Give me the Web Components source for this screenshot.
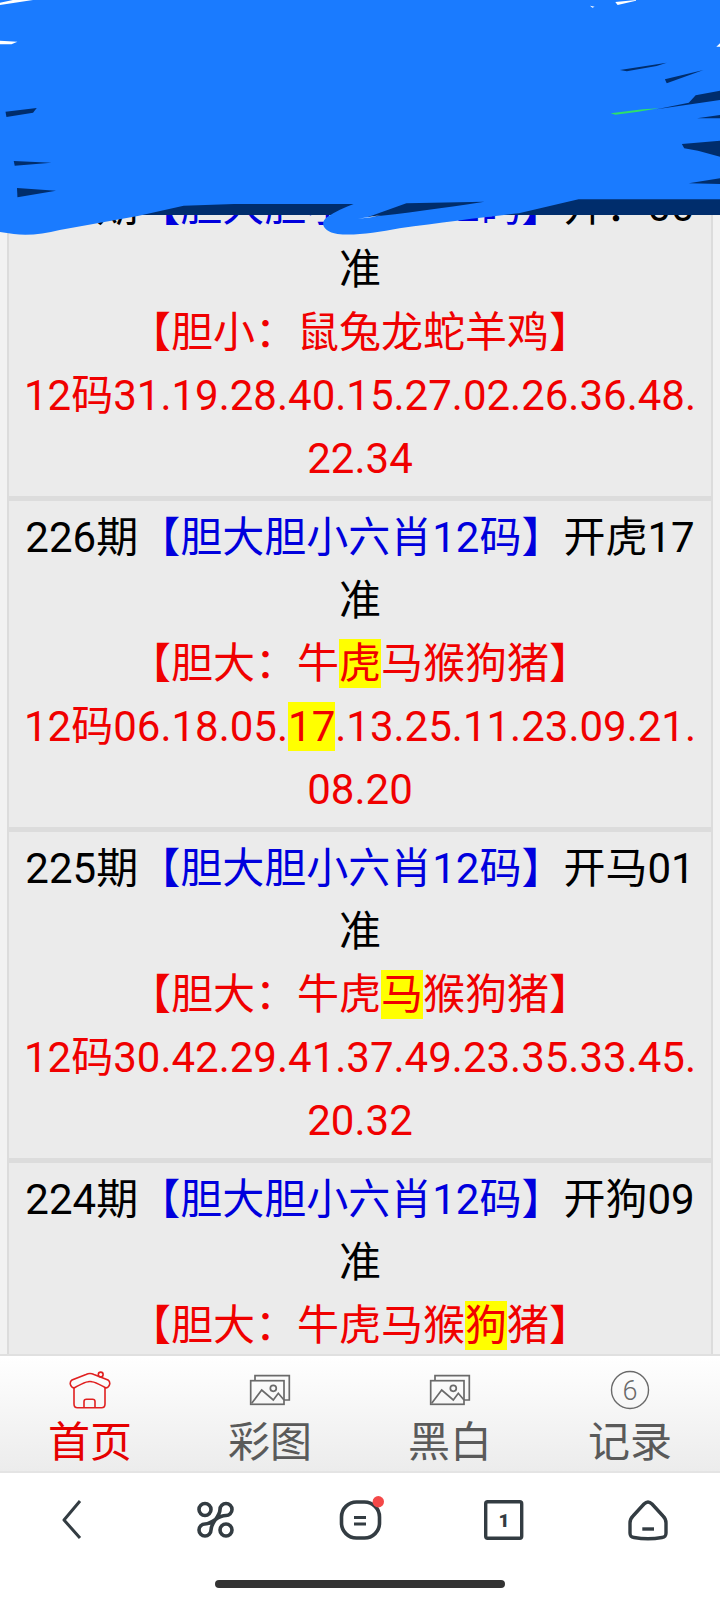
<!DOCTYPE html>
<html lang="zh">
<head>
<meta charset="utf-8">
<title>胆大胆小六肖12码</title>
<style>
  html, body { margin: 0; padding: 0; }
  body {
    width: 720px;
    height: 1600px;
    overflow: hidden;
    position: relative;
    background: #fff;
    display: flex;
    flex-direction: column;
    font-family: Roboto, "Noto Sans CJK SC", sans-serif;
  }
</style>
</head>
<body>
  <result-list>
    <result-row issue="227期" open="开：00" tag="【胆小：鼠兔龙蛇羊鸡】" nums="12码31.19.28.40.15.27.02.26.36.48.22.34"></result-row>
    <result-row issue="226期" open="开虎17" tag="【胆大：牛虎马猴狗猪】" hit="虎" nums="12码06.18.05.17.13.25.11.23.09.21.08.20" hitnum="17"></result-row>
    <result-row issue="225期" open="开马01" tag="【胆大：牛虎马猴狗猪】" hit="马" nums="12码30.42.29.41.37.49.23.35.33.45.20.32"></result-row>
    <result-row issue="224期" open="开狗09" tag="【胆大：牛虎马猴狗猪】" hit="狗"></result-row>
  </result-list>
  <tab-bar></tab-bar>
  <browser-bar></browser-bar>
  <scribble-mask></scribble-mask>

<script>
class ResultList extends HTMLElement {
  constructor () {
    super()
    this.shadow = this.attachShadow({ mode: 'open' })
  }

  connectedCallback () {
    this.shadow.innerHTML =
    /* html */`
    <style>
      :host {
        display: block;
        height: 1354px;
        overflow: hidden;
        flex: none;
        background: #f2f2f2;
        box-sizing: border-box;
        padding: 168px 7px 0;
      }
      .rows {
        display: flex;
        flex-direction: column;
      }
    </style>
    <div class="rows"><slot></slot></div>
    `
  }
}

class ResultRow extends HTMLElement {
  constructor () {
    super()
    this.shadow = this.attachShadow({ mode: 'open' })
  }

  connectedCallback () {
    const issue = this.getAttribute('issue')
    const open = this.getAttribute('open')
    const tag = this.getAttribute('tag')
    const hit = this.getAttribute('hit')
    const nums = this.getAttribute('nums')
    const hitnum = this.getAttribute('hitnum')
    const tagHtml = hit ? tag.replace(hit, `<mark>${hit}</mark>`) : tag
    const numHtml = nums && hitnum ? nums.replace('.' + hitnum + '.', `.<mark>${hitnum}</mark>.`) : nums
    this.shadow.innerHTML =
    /* html */`
    <style>
      :host {
        display: block;
        box-sizing: border-box;
        height: 331px;
        background: #ebebeb;
        border: 2px solid #dcdcdc;
        border-bottom-width: 3px;
        padding: 5px 8px 0;
        text-align: center;
        font-size: 42px;
        line-height: 63px;
        color: #000;
        word-break: break-all;
      }
      .blue { color: #0000dd; }
      .red { color: #f00000; }
      mark { background: #ffff00; color: inherit; }
    </style>
    <div>${issue}<span class="blue">【胆大胆小六肖12码】</span>${open}准</div>
    <div class="red">${tagHtml}</div>
    ${nums ? `<div class="red">${numHtml}</div>` : ''}
    `
  }
}

class TabBar extends HTMLElement {
  constructor () {
    super()
    this.shadow = this.attachShadow({ mode: 'open' })
  }

  connectedCallback () {
    const pic = /* html */`
      <svg width="42" height="32" viewBox="0 0 42 32" fill="none" stroke="#6a6a6a" stroke-width="1.7">
        <path d="M6 6V1.700H40.300V26H35"/>
        <rect x="1.700" y="6.700" width="33.300" height="23.600"/>
        <circle cx="24.300" cy="14.300" r="3"/>
        <path d="M2.700 29.300L12.700 16L24.300 26L29.300 19.300L35 26"/>
      </svg>`
    this.shadow.innerHTML =
    /* html */`
    <style>
      :host {
        display: grid;
        grid-template-columns: repeat(4, 1fr);
        flex: none;
        box-sizing: border-box;
        height: 119px;
        background: linear-gradient(#ffffff, #ececec);
        border-top: 2px solid #e0e0e0;
        border-bottom: 2px solid #e4e4e4;
        font-size: 42px;
        color: #5a5a5a;
      }
      .tab {
        display: flex;
        flex-direction: column;
        align-items: center;
        padding-top: 14px;
      }
      .ico {
        height: 40px;
        display: flex;
        align-items: center;
        justify-content: center;
      }
      .lbl { line-height: 50px; margin-top: 8px; }
      .on { color: #e60000; }
    </style>
    <div class="tab on">
      <div class="ico">
        <svg width="42" height="38" viewBox="0 0 42 38" fill="none" stroke="#e02020" stroke-width="1.6">
          <path d="M5 17C1 16 0 11 3 9L17 3.500C20 2 22 2 25 3.500L39 9C42 11 41 16 37 17C33 15 27 11 23 10.700C22 10.500 20 10.500 19 10.700C15 11 9 15 5 17Z"/>
          <circle cx="31.700" cy="3.500" r="2.400"/>
          <path d="M5 17V33C5 35.500 6 36.700 8.500 36.700H32.500C35 36.700 36 35.500 36 33V17"/>
          <path d="M15 36.700V30.500C15 29 16 28.300 17.500 28.300H23.500C25 28.300 26 29 26 30.500V36.700"/>
        </svg>
      </div>
      <div class="lbl">首页</div>
    </div>
    <div class="tab"><div class="ico">${pic}</div><div class="lbl">彩图</div></div>
    <div class="tab"><div class="ico">${pic}</div><div class="lbl">黑白</div></div>
    <div class="tab">
      <div class="ico">
        <svg width="42" height="40" viewBox="0 0 42 40" fill="none" stroke="#6a6a6a" stroke-width="1.4">
          <circle cx="21" cy="20" r="18.5"/>
          <text x="21" y="29.5" text-anchor="middle" font-family="Roboto, sans-serif" font-weight="300" font-size="27" fill="#6a6a6a" stroke="none">6</text>
        </svg>
      </div>
      <div class="lbl">记录</div>
    </div>
    `
  }
}

class BrowserBar extends HTMLElement {
  constructor () {
    super()
    this.shadow = this.attachShadow({ mode: 'open' })
  }

  connectedCallback () {
    this.shadow.innerHTML =
    /* html */`
    <style>
      :host {
        display: flex;
        flex-direction: column;
        align-items: center;
        flex: 1;
        background: #fff;
        padding-top: 25px;
      }
      .btns {
        display: grid;
        grid-template-columns: repeat(5, 144px);
        justify-items: center;
        height: 44px;
      }
      svg { display: block; overflow: visible; }
      .pill {
        margin-top: 38px;
        width: 290px;
        height: 8px;
        border-radius: 4px;
        background: #333333;
      }
    </style>
    <div class="btns">
      <svg width="44" height="44" viewBox="0 0 44 44" fill="none" stroke="#333c42" stroke-width="3">
        <path d="M30 3L14 22L30 40" stroke-linejoin="round"/>
      </svg>
      <svg width="44" height="44" viewBox="0 0 44 44" fill="none" stroke="#333c42" stroke-width="3.6">
        <circle cx="11" cy="11.500" r="6"/>
        <circle cx="32" cy="32" r="6"/>
        <path d="M21.500 21.500C24 18 26 15 26 11.500A6 6 0 1 1 32 17.500C28 17.500 25 19 21.500 21.500C19 25 17 28 17 32A6 6 0 1 1 11 26C15 26 18 24 21.500 21.500Z"/>
      </svg>
      <svg width="44" height="44" viewBox="0 0 44 44" fill="none" stroke="#333c42" stroke-width="3.6">
        <rect x="3.500" y="4" width="38" height="36" rx="15" ry="15"/>
        <path d="M16 19.500H28M16 26H28" stroke-width="3"/>
        <circle cx="40.300" cy="3.700" r="5.700" fill="#f44848" stroke="none"/>
      </svg>
      <svg width="44" height="44" viewBox="0 0 44 44" fill="none" stroke="#333c42" stroke-width="3.4">
        <rect x="3.700" y="3.700" width="36" height="36.600" rx="2"/>
        <text x="22" y="28.700" text-anchor="middle" font-family="Roboto, sans-serif" font-weight="900" font-size="19" fill="#333c42" stroke="none">1</text>
      </svg>
      <svg width="44" height="44" viewBox="0 0 44 44" fill="none" stroke="#333c42" stroke-width="3.4">
        <path d="M22 4C24 4 25 5 26 6L37 18C39 20 40 22 40 25V35C40 38 39 39 36 39.500C28 41 16 41 8 39.500C5 39 4 38 4 35V25C4 22 5 20 7 18L18 6C19 5 20 4 22 4Z" stroke-linejoin="round"/>
        <path d="M16.300 31H28"/>
      </svg>
    </div>
    <div class="pill"></div>
    `
  }
}

class ScribbleMask extends HTMLElement {
  constructor () {
    super()
    this.shadow = this.attachShadow({ mode: 'open' })
  }

  connectedCallback () {
    this.shadow.innerHTML =
    /* html */`
    <style>
      :host {
        position: absolute;
        left: 0;
        top: 0;
        width: 720px;
        height: 300px;
        pointer-events: none;
      }
      svg { display: block; }
    </style>
    <svg width="720" height="300" viewBox="0 0 1568 900" preserveAspectRatio="none">
      <rect x="0" y="0" width="1568" height="645" fill="#002d6c"/>
      <path fill="#1a7bff" d="M0 0H1568V598H1260L1130 640C1060 650 960 668 870 685C820 698 770 708 735 702C705 695 695 670 712 652C730 635 750 622 770 612L510 612L400 617L300 648L130 690C95 702 60 708 30 702L0 696Z"/>
      <path fill="#002d6c" d="M800 652L885 610L1055 605C960 625 880 640 800 652Z"/>
      <path fill="#ffffff" d="M780 656L830 645L808 652Z"/>
      <path fill="#002d6c" d="M12 335L80 324L72 338L14 351Z"/>
      <path fill="#002d6c" d="M30 483L112 488L32 497Z"/>
      <path fill="#002d6c" d="M37 564L122 572L38 592Z"/>
      <path fill="#002d6c" d="M1350 210L1452 188L1430 198L1365 214Z"/>
      <path fill="#002d6c" d="M1448 238L1532 210L1452 250Z"/>
      <path fill="#002d6c" d="M1568 272V300L1430 328L1500 308L1515 286Z"/>
      <path fill="#002d6c" d="M1518 355L1568 345V355Z"/>
      <path fill="#002d6c" d="M1485 432L1568 422V470L1520 452L1490 445Z"/>
      <path fill="#002d6c" d="M1500 550L1568 535V552Z"/>
      <path fill="#2ee06a" d="M1330 340L1400 328L1435 325L1390 335L1340 344Z"/>
      <path fill="#ffffff" d="M0 15L72 0H28L0 8Z"/>
      <path fill="#ffffff" d="M0 122L38 125L25 133H0Z"/>
      <path fill="#ffffff" d="M1340 6L1385 0V2L1345 15Z"/>
      <path fill="#ffffff" d="M1285 17L1295 20L1290 23Z"/>
      <path fill="#ffffff" d="M1560 140L1568 130V140Z"/>
    </svg>
    `
  }
}

customElements.define('result-list', ResultList)
customElements.define('result-row', ResultRow)
customElements.define('tab-bar', TabBar)
customElements.define('browser-bar', BrowserBar)
customElements.define('scribble-mask', ScribbleMask)
</script>
</body>
</html>
